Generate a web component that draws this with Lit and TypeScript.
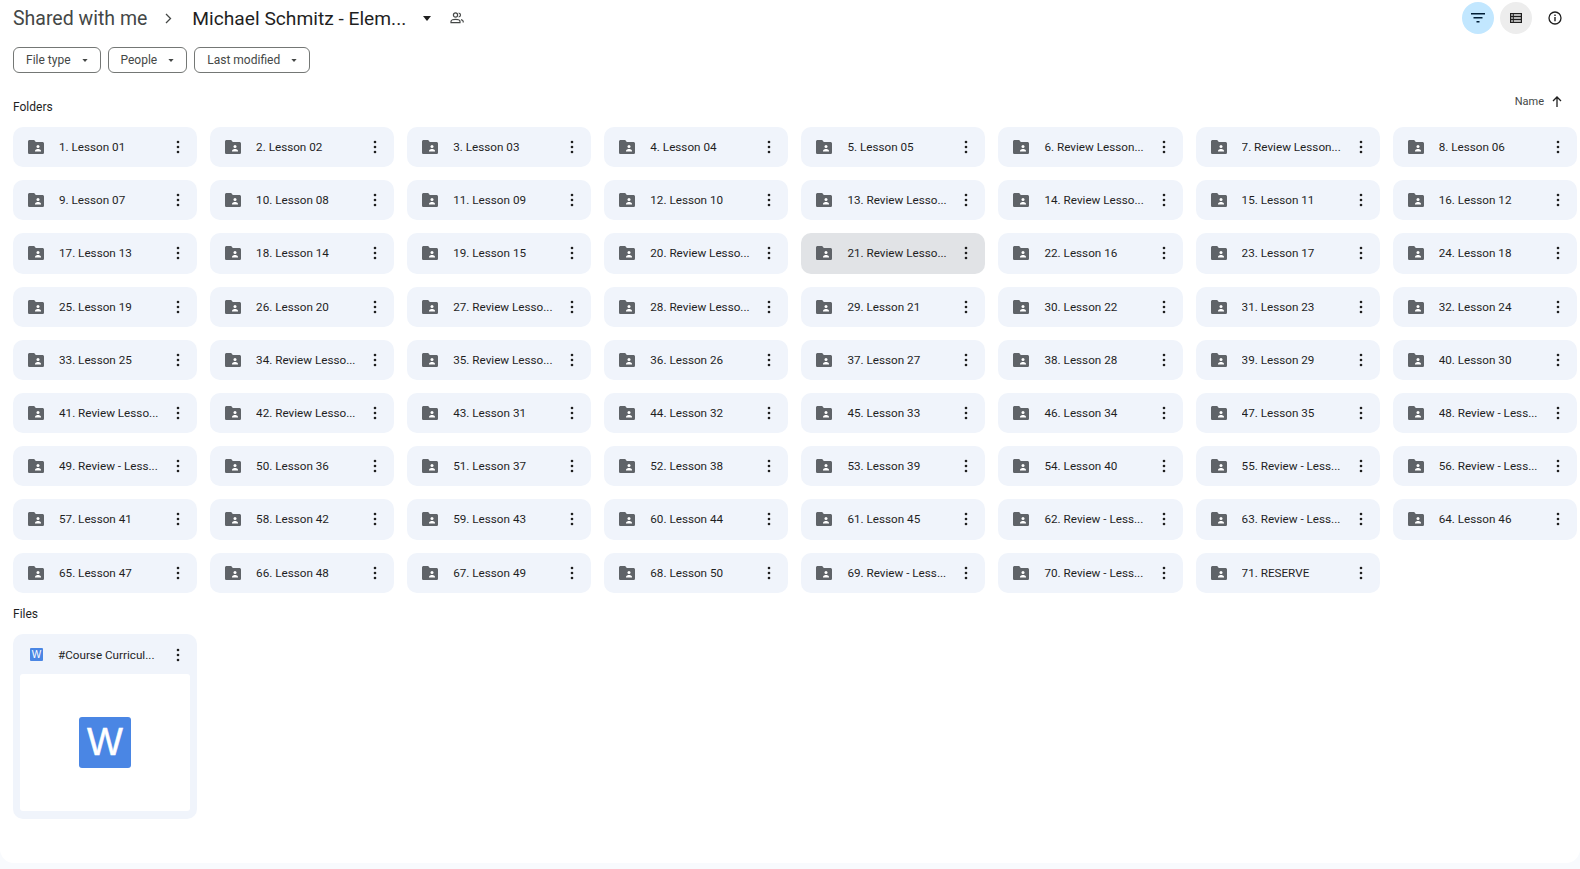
import { LitElement, html, css, svg } from 'lit';
import { customElement } from 'lit/decorators.js';

const FOLDERS = [
  '1. Lesson 01', '2. Lesson 02', '3. Lesson 03', '4. Lesson 04', '5. Lesson 05', '6. Review Lesson...', '7. Review Lesson...', '8. Lesson 06',
  '9. Lesson 07', '10. Lesson 08', '11. Lesson 09', '12. Lesson 10', '13. Review Lesso...', '14. Review Lesso...', '15. Lesson 11', '16. Lesson 12',
  '17. Lesson 13', '18. Lesson 14', '19. Lesson 15', '20. Review Lesso...', '21. Review Lesso...', '22. Lesson 16', '23. Lesson 17', '24. Lesson 18',
  '25. Lesson 19', '26. Lesson 20', '27. Review Lesso...', '28. Review Lesso...', '29. Lesson 21', '30. Lesson 22', '31. Lesson 23', '32. Lesson 24',
  '33. Lesson 25', '34. Review Lesso...', '35. Review Lesso...', '36. Lesson 26', '37. Lesson 27', '38. Lesson 28', '39. Lesson 29', '40. Lesson 30',
  '41. Review Lesso...', '42. Review Lesso...', '43. Lesson 31', '44. Lesson 32', '45. Lesson 33', '46. Lesson 34', '47. Lesson 35', '48. Review - Less...',
  '49. Review - Less...', '50. Lesson 36', '51. Lesson 37', '52. Lesson 38', '53. Lesson 39', '54. Lesson 40', '55. Review - Less...', '56. Review - Less...',
  '57. Lesson 41', '58. Lesson 42', '59. Lesson 43', '60. Lesson 44', '61. Lesson 45', '62. Review - Less...', '63. Review - Less...', '64. Lesson 46',
  '65. Lesson 47', '66. Lesson 48', '67. Lesson 49', '68. Lesson 50', '69. Review - Less...', '70. Review - Less...', '71. RESERVE',
];

const FILTERS = ['File type', 'People', 'Last modified'];

const folderIcon = svg`<svg class="folder" viewBox="0 0 16 14" width="16" height="14">
  <path fill="#5f6368" d="M1.6 0h4.6l1.6 1.9h6.6c.9 0 1.6.7 1.6 1.6v8.9c0 .9-.7 1.6-1.6 1.6H1.6C.7 14 0 13.3 0 12.4V1.6C0 .7.7 0 1.6 0z"/>
  <circle cx="10" cy="6.4" r="1.5" fill="#fff"/>
  <path fill="#fff" d="M7 10.9c0-1.2 2-1.8 3-1.8s3 .6 3 1.8v.6H7z"/>
</svg>`;

const moreIcon = svg`<svg class="more" viewBox="0 0 4 16" width="4" height="16">
  <circle cx="2" cy="3" r="1.3" fill="#1f1f1f"/>
  <circle cx="2" cy="8" r="1.3" fill="#1f1f1f"/>
  <circle cx="2" cy="13" r="1.3" fill="#1f1f1f"/>
</svg>`;

const caretIcon = svg`<svg class="caret" viewBox="0 0 7 4" width="6" height="3"><path fill="#444746" d="M0 0h7L3.5 4z"/></svg>`;

@customElement('app-root')
export class AppRoot extends LitElement {
  static styles = css`
    :host {
      display: block;
      height: 869px;
      background: #f8fafd;
      font-family: 'Roboto', 'Liberation Sans', sans-serif;
      color: #1f1f1f;
      overflow: hidden;
    }
    .page {
      height: 863px;
      box-sizing: border-box;
      background: #ffffff;
      border-radius: 0 0 14px 14px;
      padding: 0 4px 0 13px;
    }
    .header {
      height: 36px;
      display: flex;
      align-items: center;
    }
    .crumb {
      font-size: 19.5px;
      color: #444746;
    }
    .chevron {
      margin: 0 20px 0 18px;
    }
    .title {
      font-size: 19.2px;
      color: #1f1f1f;
    }
    .title-caret {
      margin-left: 17px;
    }
    .shared {
      margin-left: 19px;
    }
    .actions {
      margin-left: auto;
      display: flex;
      align-items: center;
      gap: 6px;
      padding-right: 5px;
    }
    .round {
      width: 32px;
      height: 32px;
      border-radius: 50%;
      display: flex;
      align-items: center;
      justify-content: center;
    }
    .round.filter {
      background: #c2e7ff;
    }
    .round.view {
      background: #ededed;
    }
    .round.info {
      margin-left: 1px;
    }
    .filters {
      display: flex;
      gap: 7px;
      margin-top: 11px;
    }
    .chip {
      height: 26px;
      box-sizing: border-box;
      border: 1px solid #747775;
      border-radius: 6px;
      display: flex;
      align-items: center;
      padding: 0 12px;
      gap: 11px;
      font-size: 12px;
      color: #444746;
    }
    .section {
      display: flex;
      align-items: center;
      justify-content: space-between;
      font-size: 12px;
      color: #1f1f1f;
    }
    .section.folders {
      margin-top: 23px;
      height: 21px;
      margin-bottom: 10px;
    }
    .sort {
      display: flex;
      align-items: center;
      gap: 8px;
      font-size: 11px;
      color: #444746;
      margin-top: -10px;
      padding-right: 14px;
    }
    .grid {
      display: grid;
      grid-template-columns: repeat(8, 184.1px);
      grid-auto-rows: 40.2px;
      gap: 13px;
    }
    .card {
      display: flex;
      align-items: center;
      height: 100%;
      box-sizing: border-box;
      background: #f0f4fb;
      border-radius: 10px;
      padding: 0 15px;
      font-size: 11.7px;
      color: #1f1f1f;
    }
    .card.selected {
      background: #e1e3e6;
    }
    .name {
      margin-left: 15px;
      flex: 1;
      white-space: nowrap;
      overflow: hidden;
    }
    .more {
      flex: none;
      margin-right: 2px;
    }
    .folder {
      flex: none;
    }
    .section.files {
      margin-top: 13px;
      height: 17px;
      margin-bottom: 11px;
    }
    .file {
      width: 184px;
      height: 185px;
      background: #f0f4fb;
      border-radius: 10px;
      display: flex;
      flex-direction: column;
      box-sizing: border-box;
      padding: 0 7px 8px;
    }
    .file-head {
      height: 40px;
      box-sizing: border-box;
      display: flex;
      align-items: center;
      padding: 2px 8px 0 10px;
      font-size: 11.7px;
    }
    .word-small {
      width: 13px;
      height: 13px;
      flex: none;
      border-radius: 1px;
      background: #4a86e4;
      color: #fff;
      font-size: 10px;
      line-height: 13px;
      text-align: center;
      font-family: 'Liberation Sans', sans-serif;
    }
    .preview {
      flex: 1;
      background: #fff;
      border-radius: 3px;
      display: flex;
      align-items: center;
      justify-content: center;
    }
    .word-big {
      width: 52px;
      height: 51px;
      border-radius: 3px;
      background: #4a86e4;
      color: #fff;
      font-size: 38px;
      line-height: 51px;
      text-align: center;
      font-family: 'Liberation Sans', sans-serif;
      -webkit-text-stroke: 0.5px #fff;
    }
  `;

  render() {
    return html`
      <div class="page">
        <div class="header">
          <span class="crumb">Shared with me</span>
          <svg class="chevron" viewBox="0 0 7 11" width="7" height="11"><path fill="none" stroke="#444746" stroke-width="1.3" d="M1 1l4.5 4.5L1 10"/></svg>
          <span class="title">Michael Schmitz - Elem...</span>
          <svg class="title-caret" viewBox="0 0 8 5" width="8" height="5"><path fill="#1f1f1f" d="M0 0h8L4 5z"/></svg>
          <svg class="shared" viewBox="0 0 14 12" width="14" height="12">
            <circle cx="5.5" cy="3" r="2.1" fill="none" stroke="#444746" stroke-width="1.2"/>
            <path fill="none" stroke="#444746" stroke-width="1.2" d="M1 10.6V9.4c0-1.3 2.6-2 4.5-2s4.5.7 4.5 2v1.2z"/>
            <path fill="none" stroke="#444746" stroke-width="1.2" d="M8.6 1c1.2.1 1.9 1 1.9 2s-.7 1.9-1.9 2M11 7.6c1.2.3 2.2.9 2.2 1.8v1.2"/>
          </svg>
          <div class="actions">
            <div class="round filter">
              <svg viewBox="0 0 14 10" width="14" height="10"><path fill="#001d35" d="M0 0h14v1.5H0zM2.5 4h9v1.5h-9zM5.5 8h3v1.5h-3z"/></svg>
            </div>
            <div class="round view">
              <svg viewBox="0 0 12 10" width="12" height="10"><path fill="#1f1f1f" fill-rule="evenodd" d="M0 0h12v10H0zM1.2 1.2v1.6h1.6V1.2zm2.6 0v1.6h7V1.2zM1.2 4.2v1.6h1.6V4.2zm2.6 0v1.6h7V4.2zM1.2 7.2v1.6h1.6V7.2zm2.6 0v1.6h7V7.2z"/></svg>
            </div>
            <div class="round info">
              <svg viewBox="0 0 14 14" width="14" height="14"><circle cx="7" cy="7" r="6" fill="none" stroke="#1f1f1f" stroke-width="1.3"/><path fill="#1f1f1f" d="M6.3 6h1.4v4.2H6.3zM6.3 3.6h1.4V5H6.3z"/></svg>
            </div>
          </div>
        </div>
        <div class="filters">
          ${FILTERS.map((f) => html`<div class="chip"><span>${f}</span>${caretIcon}</div>`)}
        </div>
        <div class="section folders">
          <span>Folders</span>
          <span class="sort">Name
            <svg viewBox="0 0 10 11" width="10" height="11"><path fill="none" stroke="#1f1f1f" stroke-width="1.3" d="M5 11V1M1 5l4-4 4 4"/></svg>
          </span>
        </div>
        <div class="grid">
          ${FOLDERS.map((name, i) => html`
            <div class="card ${i === 20 ? 'selected' : ''}">
              ${folderIcon}
              <span class="name">${name}</span>
              ${moreIcon}
            </div>
          `)}
        </div>
        <div class="section files"><span>Files</span></div>
        <div class="file">
          <div class="file-head">
            <div class="word-small">W</div>
            <span class="name">#Course Curricul...</span>
            ${moreIcon}
          </div>
          <div class="preview"><div class="word-big">W</div></div>
        </div>
      </div>
    `;
  }
}
